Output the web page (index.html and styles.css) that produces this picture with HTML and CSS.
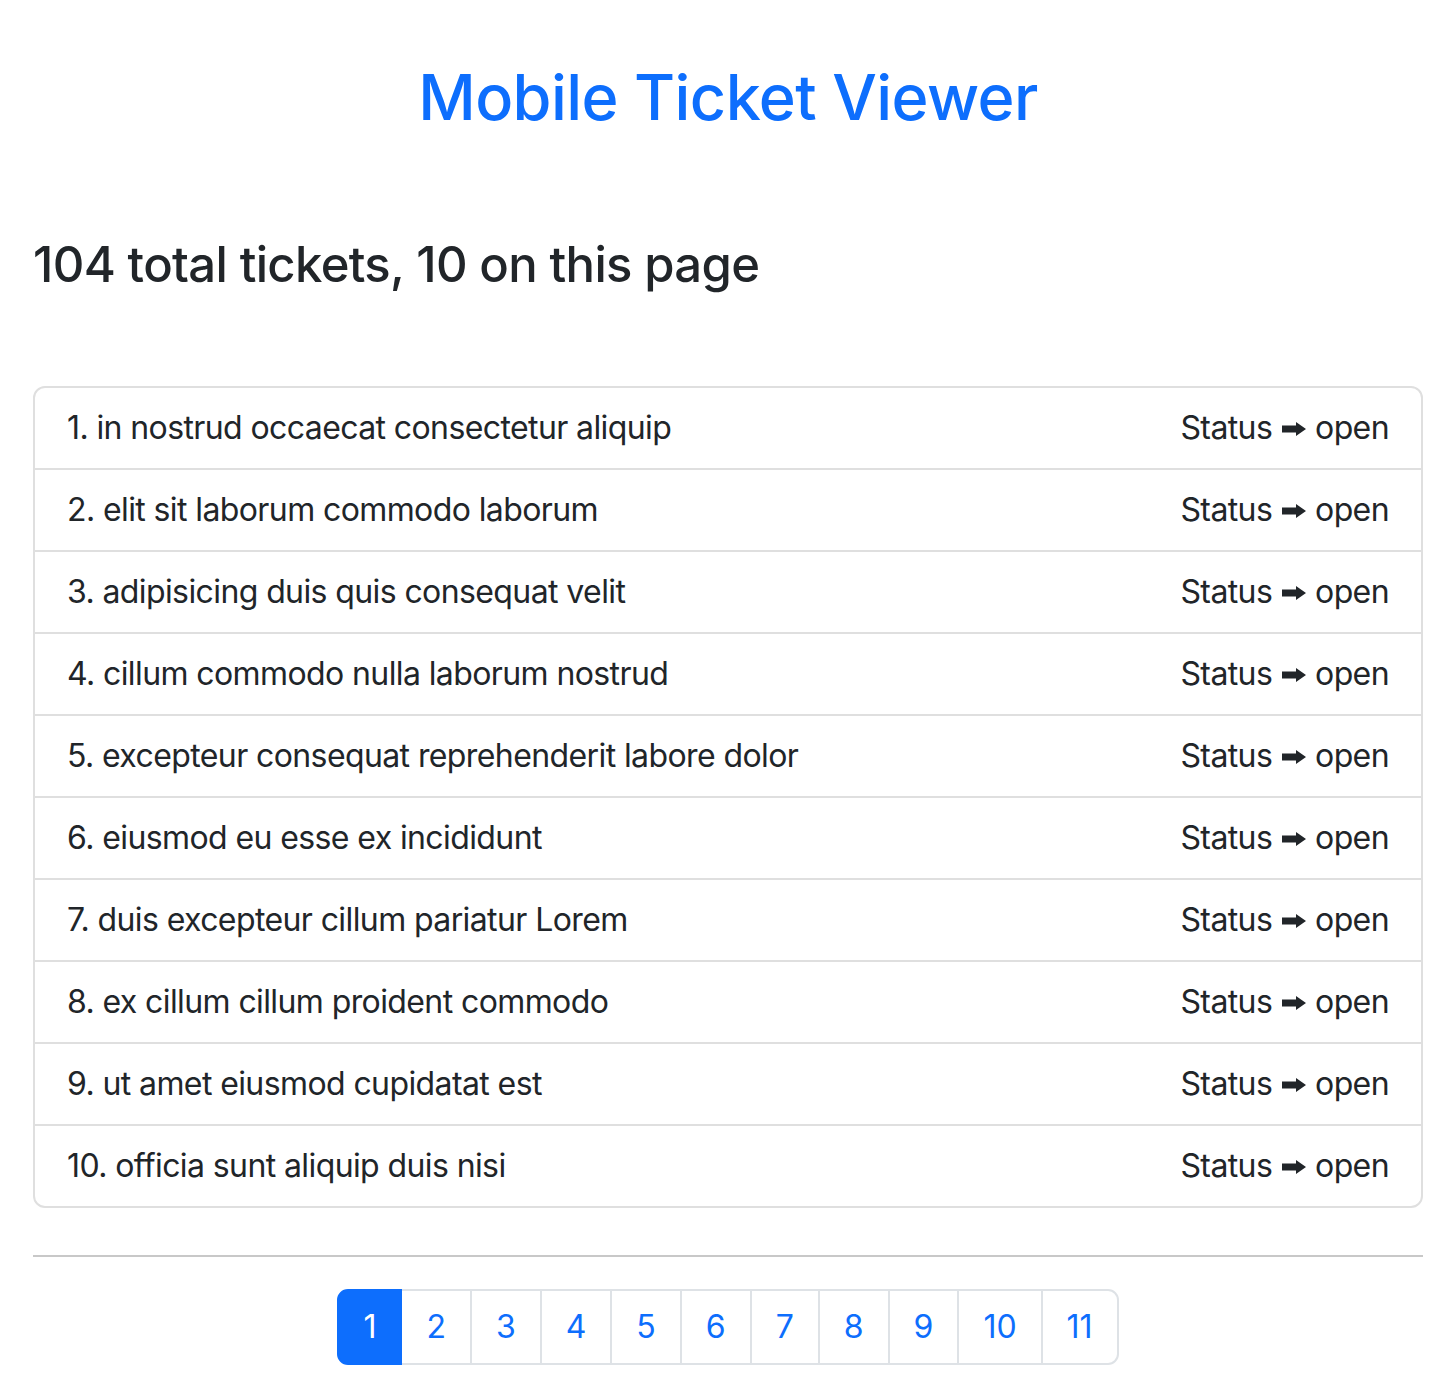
FILE: index.html
```html
<!DOCTYPE html>
<html lang="en">
<head>
<meta charset="utf-8">
<title>Mobile Ticket Viewer</title>
<link rel="stylesheet" href="styles.css">
</head>
<body>
<div class="container">
  <h1 class="title">Mobile Ticket Viewer</h1>
  <h3 class="summary">104 total tickets, 10 on this page</h3>
  <ul class="tickets">
    <li class="ticket"><span>1. in nostrud occaecat consectetur aliquip</span><span class="status">Status <svg class="arrow" viewBox="0 0 24 14" aria-hidden="true"><path d="M0 3.5H14V0L24 7L14 14V10.5H0Z"/></svg> open</span></li>
    <li class="ticket"><span>2. elit sit laborum commodo laborum</span><span class="status">Status <svg class="arrow" viewBox="0 0 24 14" aria-hidden="true"><path d="M0 3.5H14V0L24 7L14 14V10.5H0Z"/></svg> open</span></li>
    <li class="ticket"><span>3. adipisicing duis quis consequat velit</span><span class="status">Status <svg class="arrow" viewBox="0 0 24 14" aria-hidden="true"><path d="M0 3.5H14V0L24 7L14 14V10.5H0Z"/></svg> open</span></li>
    <li class="ticket"><span>4. cillum commodo nulla laborum nostrud</span><span class="status">Status <svg class="arrow" viewBox="0 0 24 14" aria-hidden="true"><path d="M0 3.5H14V0L24 7L14 14V10.5H0Z"/></svg> open</span></li>
    <li class="ticket"><span>5. excepteur consequat reprehenderit labore dolor</span><span class="status">Status <svg class="arrow" viewBox="0 0 24 14" aria-hidden="true"><path d="M0 3.5H14V0L24 7L14 14V10.5H0Z"/></svg> open</span></li>
    <li class="ticket"><span>6. eiusmod eu esse ex incididunt</span><span class="status">Status <svg class="arrow" viewBox="0 0 24 14" aria-hidden="true"><path d="M0 3.5H14V0L24 7L14 14V10.5H0Z"/></svg> open</span></li>
    <li class="ticket"><span>7. duis excepteur cillum pariatur Lorem</span><span class="status">Status <svg class="arrow" viewBox="0 0 24 14" aria-hidden="true"><path d="M0 3.5H14V0L24 7L14 14V10.5H0Z"/></svg> open</span></li>
    <li class="ticket"><span>8. ex cillum cillum proident commodo</span><span class="status">Status <svg class="arrow" viewBox="0 0 24 14" aria-hidden="true"><path d="M0 3.5H14V0L24 7L14 14V10.5H0Z"/></svg> open</span></li>
    <li class="ticket"><span>9. ut amet eiusmod cupidatat est</span><span class="status">Status <svg class="arrow" viewBox="0 0 24 14" aria-hidden="true"><path d="M0 3.5H14V0L24 7L14 14V10.5H0Z"/></svg> open</span></li>
    <li class="ticket"><span>10. officia sunt aliquip duis nisi</span><span class="status">Status <svg class="arrow" viewBox="0 0 24 14" aria-hidden="true"><path d="M0 3.5H14V0L24 7L14 14V10.5H0Z"/></svg> open</span></li>
  </ul>
  <hr class="divider">
  <nav class="pager">
    <ul class="pagination">
      <li class="page active"><a href="#">1</a></li>
      <li class="page"><a href="#">2</a></li>
      <li class="page"><a href="#">3</a></li>
      <li class="page"><a href="#">4</a></li>
      <li class="page"><a href="#">5</a></li>
      <li class="page"><a href="#">6</a></li>
      <li class="page"><a href="#">7</a></li>
      <li class="page"><a href="#">8</a></li>
      <li class="page"><a href="#">9</a></li>
      <li class="page"><a href="#">10</a></li>
      <li class="page"><a href="#">11</a></li>
    </ul>
  </nav>
</div>
</body>
</html>
```
FILE: styles.css
```css
* { box-sizing: border-box; }
html, body {
  margin: 0;
  padding: 0;
  background: #fff;
}
body {
  font-family: Inter, "Noto Sans", "Liberation Sans", sans-serif;
  color: #212529;
  font-size: 32px;
  line-height: 1.5;
}
.container {
  padding: 0 31px 0 33px;
}
.title {
  margin: 60px 0 0 0;
  font-size: 63px;
  font-weight: 500;
  line-height: 1.2;
  letter-spacing: -0.6px;
  color: #0d6efd;
  text-align: center;
}
.summary {
  margin: 100px 0 0 0;
  font-size: 49px;
  font-weight: 500;
  line-height: 1.2;
  letter-spacing: -0.65px;
}
.tickets {
  list-style: none;
  margin: 92px 0 0 0;
  padding: 0;
  border: 2px solid #dfdfdf;
  border-radius: 12px;
  letter-spacing: -0.6px;
}
.ticket {
  display: flex;
  justify-content: space-between;
  align-items: center;
  padding: 16px 32px;
  border-top: 2px solid #dfdfdf;
}
.ticket:first-child { border-top: none; }
.arrow {
  width: 24px;
  height: 14px;
  vertical-align: 3px;
  margin: 0 1px;
  fill: #212529;
}
.divider {
  margin: 47px 0 0 0;
  border: 0;
  border-top: 2px solid #c8c8c8;
}
.pager {
  display: flex;
  justify-content: center;
  margin-top: 32px;
}
.pagination {
  display: flex;
  list-style: none;
  margin: 0;
  padding: 0;
}
.page a {
  display: block;
  padding: 12px 24px;
  font-size: 32px;
  line-height: 48px;
  color: #0d6efd;
  text-decoration: none;
  background: #fff;
  border: 2px solid #dee2e6;
  margin-left: -2px;
}
.page:first-child a {
  margin-left: 0;
  border-radius: 11px 0 0 11px;
}
.page:last-child a {
  border-radius: 0 11px 11px 0;
}
.page.active a {
  background: #0d6efd;
  border-color: #0d6efd;
  color: #fff;
  position: relative;
  z-index: 1;
}
```
